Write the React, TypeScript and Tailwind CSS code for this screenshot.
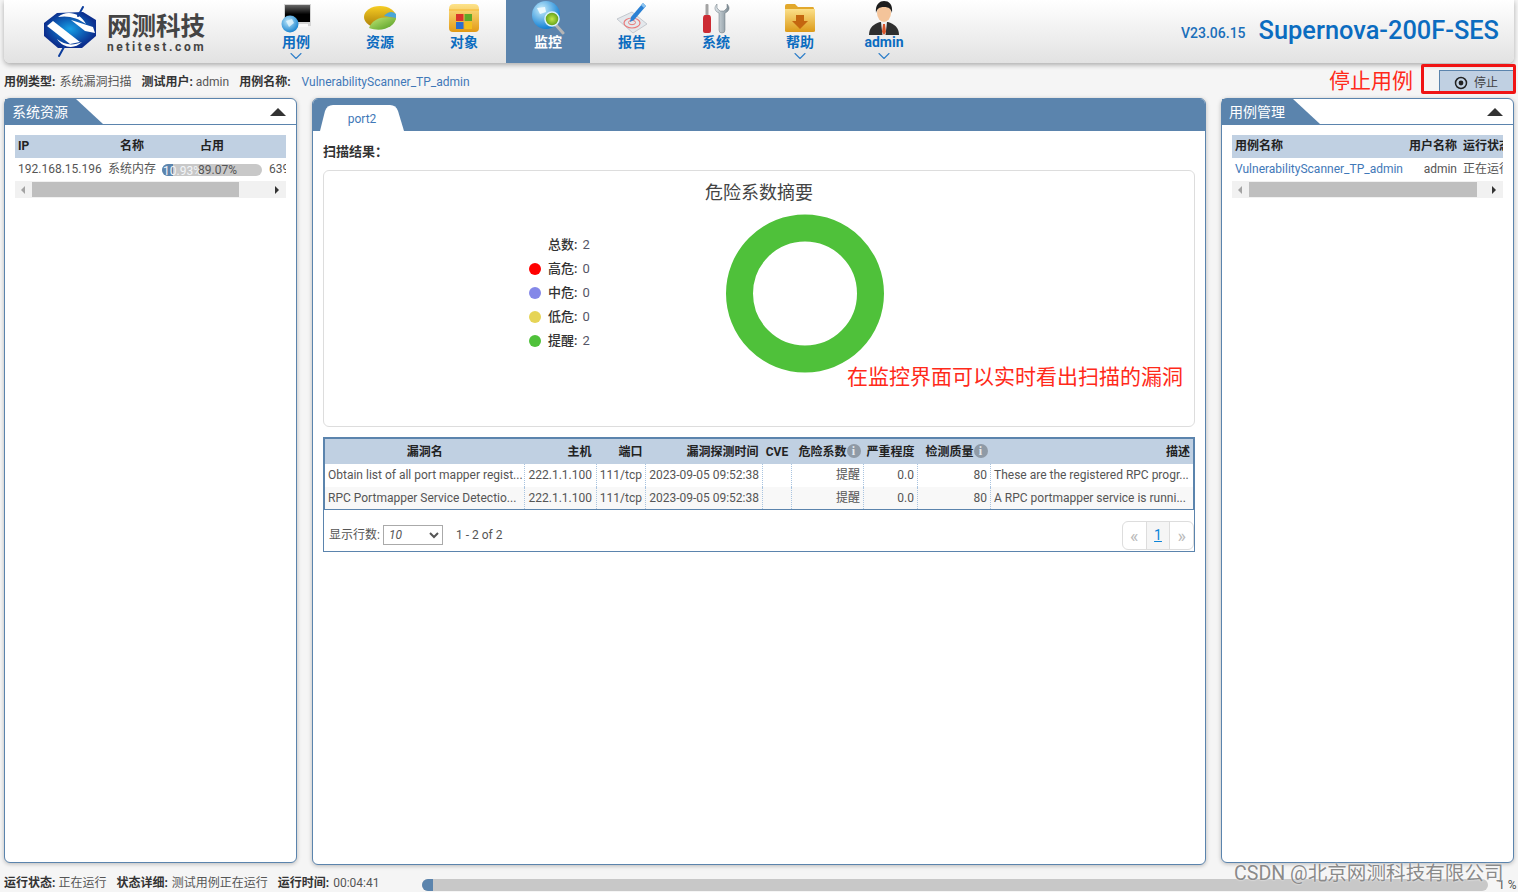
import { ChevronDown } from "lucide-react";

const FONT = "font-['Roboto','Noto_Sans_CJK_SC',sans-serif]";

function Logo() {
  return (
    <svg width="56" height="52" viewBox="0 0 56 52">
      <defs>
        <radialGradient id="lg" cx="50%" cy="47%" r="50%">
          <stop offset="0%" stopColor="#17a0e6" />
          <stop offset="55%" stopColor="#0e5fb6" />
          <stop offset="100%" stopColor="#0c2f8e" />
        </radialGradient>
      </defs>
      <path d="M1 17 L14 7 L40 6 L53 14 L53 30 L39 42 L15 42 L1 30 Z" fill="url(#lg)" />
      <path d="M15 11 C23 4 37 6 43 18 C35 12 25 9 15 11 Z" fill="#fff" />
      <path d="M4 20 L10 15 L37 36 L27 38 Z" fill="#fff" />
      <path d="M28 14 L50 21 L52 27 L42 25 Z" fill="#fff" />
      <path d="M14 33 C21 39 30 40 39 36 C32 43 21 43 14 33 Z" fill="#fff" />
      <path d="M35 10 L40 1" stroke="#0c3d9c" strokeWidth="2" strokeLinecap="round" />
      <path d="M21 41 L16 50" stroke="#0c3d9c" strokeWidth="2" strokeLinecap="round" />
    </svg>
  );
}

function IconCase() {
  return (
    <svg width="34" height="32" viewBox="0 0 34 32">
      <defs>
        <linearGradient id="c1" x1="0" y1="0" x2="0" y2="1">
          <stop offset="0%" stopColor="#666" />
          <stop offset="55%" stopColor="#000" />
        </linearGradient>
        <radialGradient id="c2" cx="40%" cy="35%" r="65%">
          <stop offset="0%" stopColor="#bde8fb" />
          <stop offset="100%" stopColor="#1e86d0" />
        </radialGradient>
      </defs>
      <rect x="5" y="2" width="27" height="22" fill="#d4d4d4" />
      <rect x="6" y="3" width="25" height="17" fill="url(#c1)" />
      <rect x="17" y="22" width="12" height="3" fill="#fafafa" />
      <circle cx="11" cy="22" r="8.5" fill="url(#c2)" />
      <path d="M7 19 L13 17 L15 21 L10 25 Z" fill="#e6f6fd" opacity="0.8" />
    </svg>
  );
}

function IconResource() {
  return (
    <svg width="34" height="30" viewBox="0 0 34 30">
      <defs>
        <linearGradient id="r1" x1="0" y1="0" x2="0" y2="1">
          <stop offset="0%" stopColor="#f6cd24" />
          <stop offset="100%" stopColor="#a87b08" />
        </linearGradient>
        <linearGradient id="r2" x1="0" y1="0" x2="1" y2="1">
          <stop offset="0%" stopColor="#c3e878" />
          <stop offset="100%" stopColor="#4f9a20" />
        </linearGradient>
      </defs>
      <ellipse cx="17" cy="14" rx="16" ry="11" fill="url(#r1)" />
      <path d="M6 25 C10 15 20 13 33 15 C32 23 20 30 6 25 Z" fill="url(#r2)" />
      <path d="M21 13 C25 8 30 8 33 11 L33 15 Z" fill="#4aa6d8" />
    </svg>
  );
}

function IconObject() {
  return (
    <svg width="32" height="30" viewBox="0 0 32 30">
      <defs>
        <linearGradient id="o1" x1="0" y1="0" x2="0" y2="1">
          <stop offset="0%" stopColor="#fde38a" />
          <stop offset="100%" stopColor="#e39a14" />
        </linearGradient>
      </defs>
      <path d="M1 6 Q1 1 6 1 L26 1 Q31 1 31 6 L31 25 Q31 29 27 29 L5 29 Q1 29 1 25 Z" fill="url(#o1)" />
      <rect x="1" y="6" width="30" height="2" fill="#f7c550" />
      <rect x="8" y="11" width="7.5" height="7" fill="#d9342b" />
      <rect x="16.5" y="11" width="7.5" height="7" fill="#5fa82a" />
      <rect x="8" y="19" width="7.5" height="7" fill="#2a6fd0" />
      <rect x="16.5" y="19" width="7.5" height="7" fill="#f2c01e" />
    </svg>
  );
}

function IconMonitor() {
  return (
    <svg width="34" height="34" viewBox="0 0 34 34">
      <defs>
        <radialGradient id="m1" cx="35%" cy="30%" r="70%">
          <stop offset="0%" stopColor="#c8eefc" />
          <stop offset="100%" stopColor="#1280d4" />
        </radialGradient>
        <radialGradient id="m2" cx="50%" cy="50%" r="50%">
          <stop offset="0%" stopColor="#c4e84a" />
          <stop offset="100%" stopColor="#5c9c16" />
        </radialGradient>
      </defs>
      <circle cx="15" cy="14" r="14" fill="url(#m1)" />
      <path d="M6 7 L14 6 L15 11 L9 13 Z" fill="#ecf9fe" />
      <path d="M24 23 L32 32" stroke="#b5b5b5" strokeWidth="3" strokeLinecap="round" />
      <circle cx="21" cy="18" r="7" fill="url(#m2)" stroke="#d9f1fb" strokeWidth="1.5" />
    </svg>
  );
}

function IconReport() {
  return (
    <svg width="34" height="32" viewBox="0 0 34 32">
      <path d="M2 17 L17 10 L32 22 L18 31 Z" fill="#e4e8ec" stroke="#c4c9cf" />
      <ellipse cx="17" cy="21" rx="8" ry="5" fill="none" stroke="#ea7a7a" strokeWidth="1.2" />
      <ellipse cx="17" cy="20.5" rx="3.5" ry="2.2" fill="none" stroke="#ea7a7a" strokeWidth="1" />
      <path d="M28 1 L31 4 L19 18 L15 20 L16 15 Z" fill="#2a80d4" />
      <path d="M28 1 L31 4 L29 6 L26 3 Z" fill="#8cc4f0" />
    </svg>
  );
}

function IconTools() {
  return (
    <svg width="28" height="32" viewBox="0 0 28 32">
      <defs>
        <linearGradient id="t1" x1="0" y1="0" x2="1" y2="0">
          <stop offset="0%" stopColor="#dfe6ea" />
          <stop offset="100%" stopColor="#7c8a93" />
        </linearGradient>
      </defs>
      <rect x="3.5" y="2" width="3" height="13" rx="1" fill="#a3a3a3" />
      <path d="M1 17 Q1 13 3 13 L7 13 Q9 13 9 17 L9 29 Q9 31 7 31 L3 31 Q1 31 1 29 Z" fill="#cc2b33" />
      <path d="M15 2 C12 5 12 9 17 11 L17 28 Q17 31 20 31 Q23 31 23 28 L23 11 C28 9 28 5 25 2 L25 6 L22 9 L18 9 L15 6 Z" fill="url(#t1)" stroke="#69757d" strokeWidth="0.5" />
    </svg>
  );
}

function IconHelp() {
  return (
    <svg width="32" height="30" viewBox="0 0 32 30">
      <defs>
        <linearGradient id="h1" x1="0" y1="0" x2="0" y2="1">
          <stop offset="0%" stopColor="#fbe08a" />
          <stop offset="100%" stopColor="#dc9a18" />
        </linearGradient>
      </defs>
      <path d="M1 3 Q1 1 3 1 L11 1 L14 4 L29 4 Q30 4 30 6 L30 9 L1 9 Z" fill="#e2a82c" />
      <path d="M1 6 L31 6 L31 28 Q31 29 29 29 L3 29 Q1 29 1 28 Z" fill="url(#h1)" />
      <path d="M12 12 L20 12 L20 18 L24 18 L16 26 L8 18 L12 18 Z" fill="#c4660f" />
    </svg>
  );
}

function IconUser() {
  return (
    <svg width="32" height="34" viewBox="0 0 32 34">
      <path d="M1 34 C1 26 6 23 12 21 L20 21 C26 23 31 26 31 34 Z" fill="#2f2f2f" />
      <path d="M13 21 L19 21 L17.5 34 L14.5 34 Z" fill="#f2f2f2" />
      <path d="M15 23 L17 23 L18 31 L16 34 L14 31 Z" fill="#d8552a" />
      <ellipse cx="16" cy="12" rx="7" ry="9" fill="#f4c49a" />
      <path d="M8 12 C7 3 12 0 16 0 C21 0 25 3 24 12 C23 8 21 6 16 6 C11 6 9 8 8 12 Z" fill="#1d1d1d" />
    </svg>
  );
}

const NAV = [
  { label: "用例", icon: <IconCase />, arrow: true },
  { label: "资源", icon: <IconResource /> },
  { label: "对象", icon: <IconObject /> },
  { label: "监控", icon: <IconMonitor />, active: true },
  { label: "报告", icon: <IconReport /> },
  { label: "系统", icon: <IconTools /> },
  { label: "帮助", icon: <IconHelp />, arrow: true },
  { label: "admin", icon: <IconUser />, arrow: true },
];

function Scrollbar({ thumb, left }: { thumb: number; left: number }) {
  return (
    <div className="flex h-[17px] items-center bg-[#f1f1f1]">
      <div className="ml-[6px] h-0 w-0 border-y-[4px] border-r-[4px] border-y-transparent border-r-[#a3a3a3]" />
      <div className="relative mx-[6px] h-[15px] flex-1">
        <div style={{ width: thumb, marginLeft: left }} className="h-full bg-[#bfbfbf]" />
      </div>
      <div className="mr-[7px] h-0 w-0 border-y-[4px] border-l-[4px] border-y-transparent border-l-[#333]" />
    </div>
  );
}

function SidePanel({ title, children }: { title: string; children: React.ReactNode }) {
  return (
    <section className="h-[765px] w-[293px] rounded-md border border-[#5b84ad] bg-white shadow-[0_1px_4px_rgba(0,0,0,0.25)]">
      <div className="flex h-[26px] items-start justify-between border-b border-[#5b84ad]">
        <div className="flex h-[25px] w-[98px] items-center bg-[#5b84ad] pl-[7px] pt-[2px] text-[14px] text-white [clip-path:polygon(0_0,71px_0,100%_100%,0_100%)]">
          {title}
        </div>
        <div className="mr-[10px] mt-[9px] h-0 w-0 border-x-[8px] border-b-[8px] border-x-transparent border-b-[#333]" />
      </div>
      <div className="px-[10px] pt-[10px]">{children}</div>
    </section>
  );
}

const RESULTS = [
  {
    name: "Obtain list of all port mapper regist...",
    desc: "These are the registered RPC progr...",
  },
  {
    name: "RPC Portmapper Service Detectio...",
    desc: "A RPC portmapper service is runni...",
  },
];

const LEGEND = [
  { label: "总数", value: 2, color: "" },
  { label: "高危", value: 0, color: "bg-[#ff0000]" },
  { label: "中危", value: 0, color: "bg-[#8488e8]" },
  { label: "低危", value: 0, color: "bg-[#e6d456]" },
  { label: "提醒", value: 2, color: "bg-[#4fc13a]" },
];

function InfoDot() {
  return (
    <span className="relative top-[-1px] inline-flex h-[14px] w-[14px] items-center justify-center rounded-full bg-[#8f9aa6] font-['Liberation_Serif',serif] text-[12px] font-bold leading-none text-[#e4e9ee]">
      i
    </span>
  );
}

const cellLine = "border-l border-dotted border-[#a9c4e0]";
const headCell = "pr-[3px] pt-px text-right font-bold";

export default function App() {
  return (
    <div className={`${FONT} relative h-[892px] w-[1518px] overflow-hidden bg-[#f5f5f5] text-[12px] text-[#555]`}>
      {/* top bar */}
      <header className="mx-[4px] flex h-[63px] items-stretch rounded-b-md bg-gradient-to-b from-white to-[#e2e2e2] shadow-[0_2px_5px_rgba(0,0,0,0.3)]">
        <div className="flex w-[250px] items-center pl-[39px]">
          <Logo />
          <div className="ml-[8px] flex flex-col pt-[2px]">
            <span className="text-[24.5px] font-bold leading-[28px] text-[#444]">网测科技</span>
            <span className="text-[12px] font-bold leading-[12px] tracking-[2.6px] text-[#444]">netitest.com</span>
          </div>
        </div>
        <nav className="flex">
          {NAV.map((n) => (
            <div
              key={n.label}
              className={`flex w-[84px] flex-col items-center ${n.active ? "bg-[#5b84ad] text-white" : "text-[#0b6cc0]"}`}
            >
              <div className="flex h-[34px] shrink-0 items-center pt-[2px]">{n.icon}</div>
              <span className="shrink-0 text-[14px] font-bold leading-[16px]">{n.label}</span>
              {n.arrow && <ChevronDown strokeWidth={1.3} className="-mb-[3px] -mt-[4px] h-[20px] w-[20px] shrink-0 text-[#2e7fc9]" />}
            </div>
          ))}
        </nav>
        <div className="ml-auto flex items-center pb-[2px] pr-[15px] text-[#0b6cc0]">
          <span className="mr-[13px] mt-[6px] text-[14px] font-medium text-[#1a6fba]">V23.06.15</span>
          <span className="text-[25.4px] font-medium">Supernova-200F-SES</span>
        </div>
      </header>

      {/* test info */}
      <div className="flex h-[35px] items-center justify-between pl-[4px]">
        <div className="mt-[3px] flex items-center">
          <b className="font-bold text-[#333]">用例类型:</b>
          <span className="ml-[4px]">系统漏洞扫描</span>
          <b className="ml-[10px] font-bold text-[#333]">测试用户:</b>
          <span className="ml-[3px]">admin</span>
          <b className="ml-[10px] font-bold text-[#333]">用例名称:</b>
          <span className="ml-[11px] text-[#3f78b8]">VulnerabilityScanner_TP_admin</span>
        </div>
        <button className="mr-[4px] flex h-[21px] w-[75px] items-center justify-center gap-[6px] border-l border-t border-[#5b84ad] bg-[#c0d0e2] pr-[2px] pt-[3px] text-[#444]">
          <svg width="14" height="14" viewBox="0 0 14 14">
            <circle cx="7" cy="7" r="5.5" fill="none" stroke="#222" strokeWidth="1.5" />
            <circle cx="7" cy="7" r="2.4" fill="#222" />
          </svg>
          停止
        </button>
      </div>

      {/* panels */}
      <main className="flex items-start gap-[15px] pl-[4px]">
        <SidePanel title="系统资源">
          <div className="w-[271px] overflow-hidden">
            <div className="flex h-[23px] items-center bg-[#c0d0e2] pb-px font-bold text-[#222]">
              <span className="ml-[3px] w-[102px]">IP</span>
              <span className="w-[80px]">名称</span>
              <span>占用</span>
            </div>
            <div className="flex h-[23px] items-center whitespace-nowrap pb-[2px]">
              <span className="ml-[3px] w-[90px] shrink-0">192.168.15.196</span>
              <span className="w-[54px] shrink-0">系统内存</span>
              <div className="mt-[2px] flex h-[12px] w-[100px] shrink-0 overflow-hidden rounded-full bg-[#c8c8c8]">
                <div className="relative w-[11px] shrink-0 bg-[#5b84ad]">
                  <span className="absolute left-px top-[-2px] text-[#f2f5f8]">10.93%</span>
                </div>
                <span className="relative ml-[25px] leading-[12px]">89.07%</span>
              </div>
              <span className="ml-[7px] shrink-0">639</span>
            </div>
            <Scrollbar thumb={207} left={1} />
          </div>
        </SidePanel>

        {/* center */}
        <section className="h-[767px] w-[894px] overflow-hidden rounded-md border border-[#5b84ad] bg-white shadow-[0_1px_4px_rgba(0,0,0,0.25)]">
          <div className="flex h-[32px] items-end bg-[#5b84ad] pl-[7px]">
            <div className="flex h-[26px] w-[84px] items-center justify-center bg-white pt-[2px] text-[#3f78b8] [clip-path:path('M0_26L5_6Q7_0_13_0L70_0Q76_0_78_6L84_26Z')]">
              port2
            </div>
          </div>
          <div className="px-[10px]">
            <h3 className="flex h-[39px] items-center pt-[2px] text-[13px] font-bold text-[#333]">扫描结果：</h3>

            <div className="h-[257px] rounded-md border border-[#ddd]">
              <p className="pt-[9px] text-center text-[18px] leading-[25px] text-[#444]">危险系数摘要</p>
              <div className="mt-[9px] flex items-center pl-[205px]">
                <ul className="-mt-px w-[197px] text-[13px]">
                  {LEGEND.map((l) => (
                    <li key={l.label} className="flex h-[24px] items-center">
                      <span className={`h-[12px] w-[12px] rounded-full ${l.color}`} />
                      <span className="ml-[7px] font-medium text-[#333]">{l.label}:</span>
                      <span className="ml-[5px] text-[#556]">{l.value}</span>
                    </li>
                  ))}
                </ul>
                <svg width="159" height="159" viewBox="0 0 159 159">
                  <circle cx="79" cy="79.5" r="65.5" fill="none" stroke="#4fc13a" strokeWidth="27" />
                </svg>
              </div>
            </div>

            <div className="mt-[10px] border border-[#5b84ad]">
              <table className="w-full table-fixed border-collapse border-x border-t border-b border-[#5b84ad] whitespace-nowrap">
                <colgroup>
                  <col className="w-[200px]" />
                  <col className="w-[72px]" />
                  <col className="w-[49px]" />
                  <col className="w-[117px]" />
                  <col className="w-[29px]" />
                  <col className="w-[72px]" />
                  <col className="w-[54px]" />
                  <col className="w-[73px]" />
                  <col />
                </colgroup>
                <thead>
                  <tr className="h-[25px] bg-[#c0d0e2] text-[#222]">
                    <th className="pt-px text-center font-bold">漏洞名</th>
                    <th className="pr-[5px] pt-px text-right font-bold">主机</th>
                    <th className="pr-[3px] pt-px text-right font-bold">端口</th>
                    <th className="pr-[4px] pt-px text-right font-bold">漏洞探测时间</th>
                    <th className="pt-px text-center font-bold">CVE</th>
                    <th className={headCell}>危险系数<InfoDot /></th>
                    <th className={headCell}>严重程度</th>
                    <th className={headCell}>检测质量<InfoDot /></th>
                    <th className={headCell}>描述</th>
                  </tr>
                </thead>
                <tbody>
                  {RESULTS.map((r, i) => (
                    <tr key={r.name} className={`h-[23px] ${i === 1 ? "bg-[#f8f8f8]" : ""}`}>
                      <td className="pl-[3px]">{r.name}</td>
                      <td className={`${cellLine} pr-[4px] text-right`}>222.1.1.100</td>
                      <td className={`${cellLine} pr-[3px] text-right`}>111/tcp</td>
                      <td className={`${cellLine} pr-[3px] text-right`}>2023-09-05 09:52:38</td>
                      <td className={cellLine} />
                      <td className={`${cellLine} pr-[3px] text-right`}>提醒</td>
                      <td className={`${cellLine} pr-[3px] text-right`}>0.0</td>
                      <td className={`${cellLine} pr-[3px] text-right`}>80</td>
                      <td className={`${cellLine} pl-[3px]`}>{r.desc}</td>
                    </tr>
                  ))}
                </tbody>
              </table>
              <div className="flex h-[41px] items-center justify-between pl-[5px] pt-[9px]">
                <div className="flex items-center">
                  <span>显示行数:</span>
                  <select className="ml-[3px] h-[20px] w-[60px] border border-[#aaa] bg-white pl-px text-[12px] italic text-[#555]">
                    <option>10</option>
                  </select>
                  <span className="ml-[13px]">1 - 2 of 2</span>
                </div>
                <div className="flex h-[29px] w-[72px] overflow-hidden rounded-md border border-[#ddd] text-[14px]">
                  <span className="flex flex-1 items-center justify-center text-[18px] text-[#bbb]">«</span>
                  <span className="flex flex-1 items-center justify-center border-x border-[#ddd] bg-[#f5f5f5] text-[#0b84d8] underline">1</span>
                  <span className="flex flex-1 items-center justify-center text-[18px] text-[#bbb]">»</span>
                </div>
              </div>
            </div>
          </div>
        </section>

        <SidePanel title="用例管理">
          <div className="w-[271px] overflow-hidden">
            <div className="flex h-[23px] items-center whitespace-nowrap bg-[#c0d0e2] pb-px font-bold text-[#222]">
              <span className="ml-[3px] w-[174px] shrink-0">用例名称</span>
              <span className="w-[54px] shrink-0">用户名称</span>
              <span className="shrink-0">运行状态</span>
            </div>
            <div className="flex h-[23px] items-center whitespace-nowrap pb-[2px]">
              <span className="ml-[3px] w-[174px] shrink-0 text-[#3f78b8]">VulnerabilityScanner_TP_admin</span>
              <span className="w-[48px] shrink-0 text-right">admin</span>
              <span className="ml-[6px] shrink-0">正在运行</span>
            </div>
            <Scrollbar thumb={228} left={1} />
          </div>
        </SidePanel>
      </main>

      {/* status */}
      <footer className="flex h-[27px] items-center whitespace-nowrap pl-[4px] pt-[9px]">
        <div className="flex w-[418px]">
          <b className="font-bold text-[#333]">运行状态:</b>
          <span className="ml-[3px]">正在运行</span>
          <b className="ml-[10px] font-bold text-[#333]">状态详细:</b>
          <span className="ml-[4px]">测试用例正在运行</span>
          <b className="ml-[10px] font-bold text-[#333]">运行时间:</b>
          <span className="ml-[4px]">00:04:41</span>
        </div>
        <div className="mt-[4px] flex h-[12px] w-[1066px] overflow-hidden rounded-full bg-[#c8c8c8]">
          <div className="w-[11px] bg-[#5b84ad]" />
        </div>
        <span className="ml-[10px] mt-[4px]">1 %</span>
      </footer>

      {/* screenshot annotations */}
      <span className="absolute left-[847px] top-[362px] text-[21px] leading-[30px] text-[#ff2a1a]">在监控界面可以实时看出扫描的漏洞</span>
      <span className="absolute left-[1329px] top-[66px] text-[21px] leading-[30px] text-[#ff2a1a]">停止用例</span>
      <div className="absolute left-[1421px] top-[64px] h-[30px] w-[95px] rounded-[2px] border-[3px] border-[#f01414]" />
      <span className="absolute left-[1234px] top-[860px] text-[19.6px] leading-[28px] text-[#8a8a8a] [text-shadow:0_0_2px_#fff]">CSDN @北京网测科技有限公司</span>
    </div>
  );
}
